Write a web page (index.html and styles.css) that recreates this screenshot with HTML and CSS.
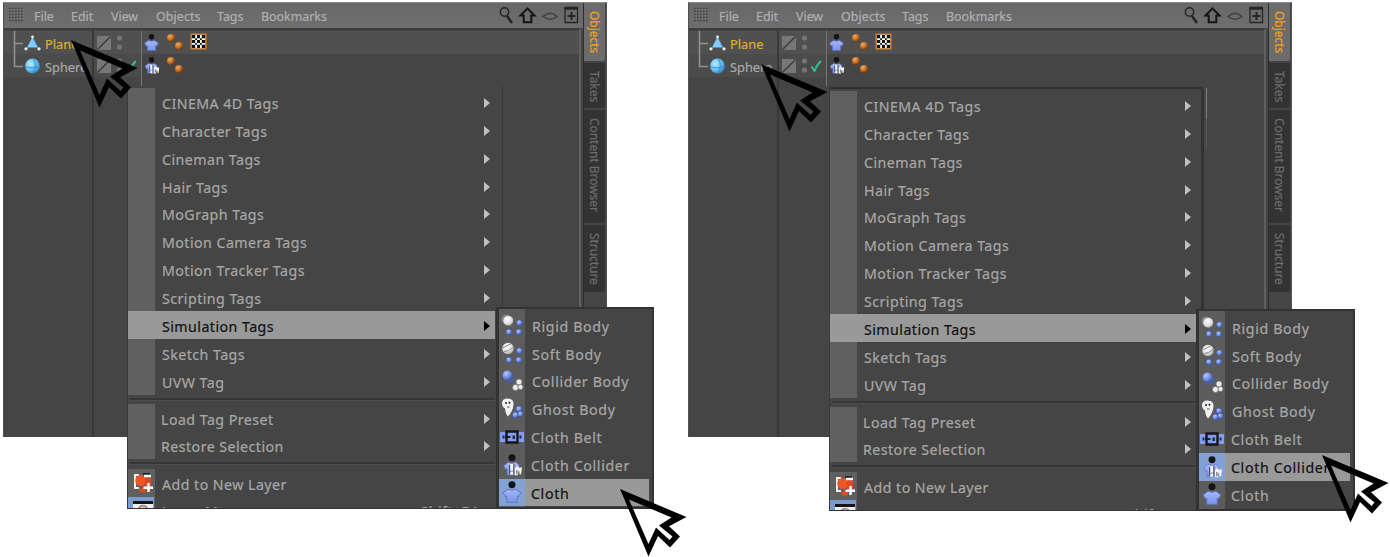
FILE: index.html
```html
<!DOCTYPE html>
<html lang="en">
<head>
<meta charset="utf-8">
<title>Simulation Tags</title>
<link rel="stylesheet" href="styles.css">
</head>
<body>
<svg class="defs" aria-hidden="true">
  <defs>
    <radialGradient id="gBlue" cx=".35" cy=".3" r=".75"><stop offset="0" stop-color="#b5c8ff"/><stop offset=".6" stop-color="#6d8ade"/><stop offset="1" stop-color="#3c54a0"/></radialGradient>
    <radialGradient id="gWhite" cx=".4" cy=".35" r=".75"><stop offset="0" stop-color="#fff"/><stop offset=".6" stop-color="#dedede"/><stop offset="1" stop-color="#8a8a8a"/></radialGradient>
    <radialGradient id="gOrange" cx=".35" cy=".3" r=".75"><stop offset="0" stop-color="#f3aa60"/><stop offset=".5" stop-color="#c8732a"/><stop offset="1" stop-color="#693208"/></radialGradient>
    <radialGradient id="gSky" cx=".35" cy=".35" r=".75"><stop offset="0" stop-color="#b8ecff"/><stop offset=".6" stop-color="#5fbcf0"/><stop offset="1" stop-color="#2878b5"/></radialGradient>
    <linearGradient id="gShirt" x2="0" y2="1"><stop offset="0" stop-color="#a6b8fb"/><stop offset="1" stop-color="#7894e6"/></linearGradient>
  </defs>
  <symbol id="cursor" viewBox="0 0 67 68"><path fill-rule="evenodd" d="M0 0 66.5 28 49 37.300 60 47.500 50 58.500 38 47 28.500 67.500ZM9 10.500 28.500 55 36 38.500 49.500 51 52.500 47.500 39 36.500 51.500 28.500Z"/></symbol>
  <symbol id="grip" viewBox="0 0 15 15"><g fill="none" stroke="#444" stroke-width="1.400" stroke-dasharray="1.800 1.200"><path d="M0 1.500h15M0 4.500h15M0 7.500h15M0 10.500h15M0 13.500h15"/></g><g fill="none" stroke="#999" stroke-width=".6" stroke-dasharray="1 2"><path d="M1.500 2.600h13M1.500 5.600h13M1.500 8.600h13M1.500 11.600h13"/></g></symbol>
  <symbol id="tools" viewBox="0 0 80 20"><g fill="none" stroke="#252525"><circle cx="5.500" cy="6" r="4.200" stroke-width="1.500"/><path d="m8 10 5 7" stroke-width="2.600"/><path d="M28.500 2.400 21.500 9.600h3.200v6.600h7.600V9.600h3.200Z" stroke-width="2" stroke="#151515"/><path d="M44 10.500q7.500-6.500 14 0-6.500 5.500-14 0Z" stroke="#404040" stroke-width="1.500"/><path d="M66 2h12.500v14.500H66Z" stroke-width="1.300"/><path d="M65.500 2.200h13.500" stroke-width="3"/><path d="M68.500 10h8M72.500 6v8" stroke-width="2"/></g></symbol>
  <symbol id="tree" viewBox="0 0 12 46"><path d="M2.500 0v35.500H11M2.500 12.500H11" fill="none" stroke="#929292" stroke-width="1.500"/></symbol>
  <symbol id="plane" viewBox="0 0 17 16"><path d="m8.500 2 5.500 10.500H3Z" fill="#86cbfb"/><path d="m8.500 2 5.500 10.500H3" fill="none" stroke="#4c91c4"/><g fill="#eee"><circle cx="8.500" cy="2" r="1.400"/><circle cx="2" cy="13.800" r="1.600"/><circle cx="15" cy="13.800" r="1.600"/></g></symbol>
  <symbol id="sphere" viewBox="0 0 17 16"><circle cx="8.500" cy="8" r="7.400" fill="url(#gSky)"/><path d="M9.500.8q4 7-.5 14.400M1.200 8.500q7 3 14.600-.5" fill="none" stroke="#348bc5" stroke-width=".9"/></symbol>
  <symbol id="vis" viewBox="0 0 42 18"><path d="M1 2h14v14H1Z" fill="#777"/><path d="m1.500 15.500 13-13" stroke="#3d3d3d" stroke-width="1.600"/><circle cx="23.500" cy="4" r="2.600" fill="#747474"/><circle cx="23.500" cy="13" r="2.600" fill="#747474"/></symbol>
  <symbol id="check" viewBox="0 0 12 12"><path d="m1.500 6.500 3 4.500Q7 4.500 11 1" fill="none" stroke="#2bc98a" stroke-width="1.800"/></symbol>
  <symbol id="cloth" viewBox="0 0 20 22"><circle cx="10" cy="4.300" r="3.200" fill="#141414"/><path d="M6.500 8.500q3.500 1.800 7 0l4.500 3.200-1.700 3.500-1.500-.5V20.500H5.200v-5.800l-1.500.5L2 11.700Z" fill="url(#gShirt)" stroke="#5c75c4" stroke-width=".9"/></symbol>
  <symbol id="collider" viewBox="0 0 20 22"><circle cx="10" cy="4.300" r="3.200" fill="#141414"/><path d="M6.500 8.500q3.500 1.800 7 0l3 2.500v6l-3 3h-8v-6L4 15l-1.500-3.300Z" fill="url(#gShirt)" stroke="#5c75c4" stroke-width=".6"/><path d="M8.500 10h2.500v6H8.500ZM8.500 17.200h2.500v2.800H8.500ZM12.500 14l2.300-2 1.500 1.500 2.800-.5-.8 6.500h-1.500v-3h-1.200v4h-3.100Z" fill="#f7f7f7"/><path d="M11.700 10v9.500M14.500 15.500v4M7.800 11v8" stroke="#4a4a4a" stroke-width=".9"/></symbol>
  <symbol id="dyn" viewBox="0 0 18 18"><circle cx="5" cy="5" r="4" fill="url(#gOrange)"/><circle cx="13" cy="13" r="4" fill="url(#gOrange)"/></symbol>
  <symbol id="checker" viewBox="0 0 17 17"><path d="M1 1h15v15H1Z" fill="#fff" stroke="#b36b2c" stroke-width="1.700"/><path d="M2 2h3.200v3.200H2ZM7 2h3v3.200H7ZM11.800 2H15v3.200h-3.200ZM5.200 5.200H7V7H5.200ZM10 5.200h1.800V7H10ZM2 7h3.200v3H2ZM7 7h3v3H7ZM11.800 7H15v3h-3.200ZM5.200 10H7v1.800H5.200ZM10 10h1.800v1.800H10ZM2 11.800h3.200V15H2ZM7 11.800h3V15H7ZM11.800 11.800H15V15h-3.200Z" fill="#131313"/><path d="M2.600 2.600h2v2h-2ZM12.400 2.600h2v2h-2ZM2.600 12.400h2v2h-2ZM12.400 12.400h2v2h-2Z" fill="#131313"/></symbol>
  <symbol id="rigid" viewBox="0 0 24 24"><circle cx="6" cy="6" r="4.500" fill="#858585"/><circle cx="8.300" cy="7.800" r="5" fill="url(#gWhite)"/><g fill="url(#gBlue)" stroke="#40599d" stroke-width=".7"><circle cx="19.500" cy="9.800" r="3"/><circle cx="9" cy="19" r="3"/><circle cx="18.800" cy="19" r="3"/></g></symbol>
  <symbol id="soft" viewBox="0 0 24 24"><circle cx="8" cy="7.500" r="5.700" fill="url(#gWhite)"/><path d="m2.500 7 8-4M4 10.500q5 0 9-4" stroke="#8a8a8a" fill="none"/><g fill="url(#gBlue)" stroke="#40599d" stroke-width=".7"><circle cx="19.500" cy="9.800" r="3"/><circle cx="9" cy="19" r="3"/><circle cx="18.800" cy="19" r="3"/></g></symbol>
  <symbol id="cbody" viewBox="0 0 24 24"><circle cx="10" cy="9.500" r="4.500" fill="#4b5e99"/><circle cx="7.500" cy="6.500" r="4.900" fill="url(#gBlue)"/><g fill="#eee" stroke="#777" stroke-width=".8"><circle cx="19" cy="13" r="3"/><circle cx="15.500" cy="18.500" r="3"/><circle cx="20.500" cy="18" r="2.500"/></g></symbol>
  <symbol id="ghost" viewBox="0 0 24 24"><path d="M2 7Q1.500 1.500 7.500 1.500q6.500 0 6 6Q13 14 8 19.500 5.500 17 5 11.500 2.500 10.500 2 7Z" fill="#f0f0f0"/><circle cx="6" cy="6" r="1" fill="#222"/><circle cx="9.500" cy="5.800" r="1" fill="#222"/><path d="M7 10h2.500" stroke="#555"/><g fill="url(#gBlue)" stroke="#40599d" stroke-width=".7"><circle cx="19" cy="12" r="3.100"/><circle cx="15.500" cy="18" r="3.100"/><circle cx="20.500" cy="17" r="2.800"/></g></symbol>
  <symbol id="belt" viewBox="0 0 24 24"><path d="M0 7h24v10H0Z" fill="#819df5"/><path d="M2.500 10.500h2v3h-2ZM19.500 10.500h2v3h-2Z" fill="#222b55"/><path d="M6.500 6.500h11v11h-11Z" fill="none" stroke="#161616" stroke-width="2.400"/><path d="M12.500 10.500h2.500v3.500h-2.500Z" fill="#222b55"/><path d="M5 12h5.500" stroke="#161616" stroke-width="1.800"/></symbol>
  <symbol id="layer" viewBox="0 0 22 22"><path d="M2 2h5v2H4v11h3v2H2Z" fill="#f0f0f0"/><path d="M11 1h7v2h-7Z" fill="#222"/><circle cx="8.800" cy="8.500" r="5.500" fill="#ed5525"/><path d="M13 5.500h6v9h-4l-1.500 6H8l-1-3.500 6-2Z" fill="#d84d24"/><path d="M12 4h7M16.500 11v9M11.500 15.800h9.500" stroke="#fff" stroke-width="2.400"/></symbol>
  <symbol id="manager" viewBox="0 0 22 22"><path d="M1 0h20v22H1Z" fill="#eee"/><path d="M1 0h20v3H1Z" fill="#151515"/><circle cx="11" cy="9" r="4.500" fill="#f0b59d" stroke="#888" stroke-width="1.500"/></symbol>
</svg>

<main class="stage">
  <section class="shot shot-left">
    <div class="window">
      <div class="manager">
        <nav class="menubar"><svg class="grip"><use href="#grip"/></svg><span class="m-file">File</span><span class="m-edit">Edit</span><span class="m-view">View</span><span class="m-objects">Objects</span><span class="m-tags">Tags</span><span class="m-book">Bookmarks</span><svg class="tools"><use href="#tools"/></svg></nav>
        <div class="content">
          <div class="tree"><svg class="lines"><use href="#tree"/></svg>
            <div class="obj first"><svg><use href="#plane"/></svg><span class="selected">Plane</span></div>
            <div class="obj"><svg><use href="#sphere"/></svg><span>Sphere</span></div>
          </div>
          <div class="flags">
            <div class="flag first"><svg class="vis"><use href="#vis"/></svg></div>
            <div class="flag"><svg class="vis"><use href="#vis"/></svg><svg class="check"><use href="#check"/></svg></div>
          </div>
          <div class="tags">
            <div class="tagrow first"><svg class="t-cloth"><use href="#cloth"/></svg><svg class="t-dyn"><use href="#dyn"/></svg><svg class="t-checker"><use href="#checker"/></svg></div>
            <div class="tagrow"><svg class="t-cloth"><use href="#collider"/></svg><svg class="t-dyn"><use href="#dyn"/></svg></div>
          </div>
        </div>
      </div>
      <aside class="tabs"><div class="tab active t1">Objects</div><div class="tab t2">Takes</div><div class="tab t3">Content Browser</div><div class="tab t4">Structure</div></aside>
    </div>
    <i class="guide"></i>
    <div class="menu">
      <div class="group">
        <div class="item">CINEMA 4D Tags<b></b></div><div class="item">Character Tags<b></b></div><div class="item">Cineman Tags<b></b></div><div class="item">Hair Tags<b></b></div><div class="item">MoGraph Tags<b></b></div><div class="item">Motion Camera Tags<b></b></div><div class="item">Motion Tracker Tags<b></b></div><div class="item">Scripting Tags<b></b></div><div class="item hot">Simulation Tags<b></b></div><div class="item">Sketch Tags<b></b></div><div class="item">UVW Tag<b></b></div>
      </div>
      <div class="group second"><div class="item">Load Tag Preset<b></b></div><div class="item">Restore Selection<b></b></div></div>
      <div class="group"><div class="item"><svg class="layer"><use href="#layer"/></svg>Add to New Layer</div><div class="item last"><svg class="layer lm"><use href="#manager"/></svg>Layer Manager...<span class="key">Shift+F4</span></div></div>
    </div>
    <div class="submenu">
      <div class="sub"><svg><use href="#rigid"/></svg>Rigid Body</div><div class="sub"><svg><use href="#soft"/></svg>Soft Body</div><div class="sub"><svg><use href="#cbody"/></svg>Collider Body</div><div class="sub"><svg><use href="#ghost"/></svg>Ghost Body</div><div class="sub"><svg><use href="#belt"/></svg>Cloth Belt</div><div class="sub"><svg><use href="#collider"/></svg>Cloth Collider</div><div class="sub hot"><svg><use href="#cloth"/></svg>Cloth</div>
    </div>
    <svg class="cursor c1"><use href="#cursor"/></svg>
    <svg class="cursor c2"><use href="#cursor"/></svg>
  </section>

  <section class="shot shot-right">
    <div class="window">
      <div class="manager">
        <nav class="menubar"><svg class="grip"><use href="#grip"/></svg><span class="m-file">File</span><span class="m-edit">Edit</span><span class="m-view">View</span><span class="m-objects">Objects</span><span class="m-tags">Tags</span><span class="m-book">Bookmarks</span><svg class="tools"><use href="#tools"/></svg></nav>
        <div class="content">
          <div class="tree"><svg class="lines"><use href="#tree"/></svg>
            <div class="obj first"><svg><use href="#plane"/></svg><span class="selected">Plane</span></div>
            <div class="obj"><svg><use href="#sphere"/></svg><span>Sphere</span></div>
          </div>
          <div class="flags">
            <div class="flag first"><svg class="vis"><use href="#vis"/></svg></div>
            <div class="flag"><svg class="vis"><use href="#vis"/></svg><svg class="check"><use href="#check"/></svg></div>
          </div>
          <div class="tags">
            <div class="tagrow first"><svg class="t-cloth"><use href="#cloth"/></svg><svg class="t-dyn"><use href="#dyn"/></svg><svg class="t-checker"><use href="#checker"/></svg></div>
            <div class="tagrow"><svg class="t-cloth"><use href="#collider"/></svg><svg class="t-dyn"><use href="#dyn"/></svg></div>
          </div>
        </div>
      </div>
      <aside class="tabs"><div class="tab active t1">Objects</div><div class="tab t2">Takes</div><div class="tab t3">Content Browser</div><div class="tab t4">Structure</div></aside>
    </div>
    <i class="guide"></i>
    <div class="menu">
      <div class="group">
        <div class="item">CINEMA 4D Tags<b></b></div><div class="item">Character Tags<b></b></div><div class="item">Cineman Tags<b></b></div><div class="item">Hair Tags<b></b></div><div class="item">MoGraph Tags<b></b></div><div class="item">Motion Camera Tags<b></b></div><div class="item">Motion Tracker Tags<b></b></div><div class="item">Scripting Tags<b></b></div><div class="item hot">Simulation Tags<b></b></div><div class="item">Sketch Tags<b></b></div><div class="item">UVW Tag<b></b></div>
      </div>
      <div class="group second"><div class="item">Load Tag Preset<b></b></div><div class="item">Restore Selection<b></b></div></div>
      <div class="group"><div class="item"><svg class="layer"><use href="#layer"/></svg>Add to New Layer</div><div class="item last"><svg class="layer lm"><use href="#manager"/></svg>Layer Manager...<span class="key">Shift+F4</span></div></div>
    </div>
    <div class="submenu">
      <div class="sub"><svg><use href="#rigid"/></svg>Rigid Body</div><div class="sub"><svg><use href="#soft"/></svg>Soft Body</div><div class="sub"><svg><use href="#cbody"/></svg>Collider Body</div><div class="sub"><svg><use href="#ghost"/></svg>Ghost Body</div><div class="sub"><svg><use href="#belt"/></svg>Cloth Belt</div><div class="sub hot"><svg><use href="#collider"/></svg>Cloth Collider</div><div class="sub"><svg><use href="#cloth"/></svg>Cloth</div>
    </div>
    <svg class="cursor c1"><use href="#cursor"/></svg>
    <svg class="cursor c2"><use href="#cursor"/></svg>
  </section>
</main>
</body>
</html>
```
FILE: styles.css
```css
* { box-sizing: border-box; }
body { margin: 0; background: #fff; font-family: "Noto Sans", "Open Sans", sans-serif; overflow: hidden; -webkit-text-stroke-width: .2px; }
svg { display: block; flex: none; }
.defs { position: absolute; width: 0; height: 0; }
.stage { display: grid; grid-template-columns: 685px 705px; height: 557px; }
.shot { position: relative; padding: 2px 0 0 3px; }

/* object manager window */
.window { width: 604px; height: 435px; display: flex; background: #454545; border-top: 1px solid #8a8a8a; border-left: 1px solid #505050; border-right: 1px solid #575054; }
.manager { width: 579px; display: flex; flex-direction: column; }
.menubar { height: 25px; display: flex; align-items: center; background: linear-gradient(#686868, #6e6e6e); color: #b0b0b0; font-size: 12.4px; padding-left: 5px; white-space: nowrap; }
.menubar span { flex: none; margin-top: 1px; }
.grip { width: 15px; height: 15px; margin-top: -2px; }
.menubar .m-file { width: 37px; margin-left: 10px; }
.m-edit { width: 40px; }
.m-view { width: 45px; }
.m-objects { width: 61px; letter-spacing: .1px; }
.m-tags { width: 44px; }
.tools { width: 80px; height: 20px; margin-left: auto; margin-right: 4px; }
.content { flex: 1; display: grid; grid-template-columns: 90px 47px 1fr; border-top: 2px solid #3d3d3d; border-right: 2px solid #606060; margin-right: 2px; padding-top: 1px; }
.tree { position: relative; border-right: 2px solid #393939; }
.lines { position: absolute; left: 8px; top: 0; width: 12px; height: 46px; }
.obj { height: 23px; display: flex; align-items: center; gap: 4px; padding: 2px 0 0 20px; background: #4b4b4b; color: #aaa; font-size: 12.8px; }
.obj svg { width: 17px; height: 16px; margin-top: -1px; }
.obj.first, .flag.first, .tagrow.first { background: #505050; }
.obj .selected { color: #dcb02e; }
.flag { height: 23px; display: flex; align-items: center; background: #4b4b4b; padding-left: 2px; }
.vis { width: 42px; height: 18px; }
.check { width: 12px; height: 12px; margin-left: -13px; }
.tags { position: relative; }
.tags::before { content: ""; position: absolute; left: 0; top: 0; width: 1px; height: 55px; background: #777; }
.tagrow { height: 23px; display: flex; align-items: center; padding-left: 2px; }
.t-cloth { width: 17px; height: 19px; }
.t-dyn { width: 18px; height: 18px; margin: -2px 6px 0 6px; }
.t-checker { width: 17px; height: 17px; margin-top: -2px; }
.tabs { width: 23px; display: flex; flex-direction: column; gap: 2px; border-left: 1px solid #2e2e2e; }
.tab { writing-mode: vertical-rl; width: 22px; line-height: 22px; background: #333; color: #6c6c6c; font-size: 12px; border-radius: 0 0 3px 0; padding-top: 8px; border-right: 1px solid #444; letter-spacing: -.05px; white-space: nowrap; }
.tab.active { background: #6c6c6c; color: #f0a11e; }
.t1 { height: 58px; }
.t2 { height: 45px; }
.t3 { height: 113px; }
.t4 { height: 67px; }

/* context menu */
.guide { position: absolute; left: 502px; top: 86px; width: 1px; height: 222px; background: #373737; }
.menu { position: absolute; left: 127px; top: 87px; width: 370px; height: 421.5px; overflow: hidden; background: #454545; border-left: 1px solid #3a3a3a; border-bottom: 1px solid #343434; padding: 1px 2px 0 0; }
.group { background: linear-gradient(90deg, #606060 27px, transparent 27px); position: relative; }
.second { margin: 9px 0 9.500px; }
.second::before, .second::after { content: ""; position: absolute; left: 2px; right: 0; height: 2px; background: #363636; border-bottom: 1px solid #4e4e4e; }
.second::before { top: -6px; }
.second::after { bottom: -6px; }
.item { position: relative; height: 27.890px; display: flex; align-items: center; padding: 3px 0 0 34px; color: #a8a8a6; font-size: 14.2px; letter-spacing: .46px; white-space: nowrap; }
.second .item { padding-left: 33px; }
.item b { margin: -1px 5px 0 auto; border-left: 6px solid #c0c0c0; border-top: 5.500px solid transparent; border-bottom: 5.500px solid transparent; }
.item.hot { background: #999; color: #111; }
.hot b { border-left-color: #000; }
.item .layer { width: 22px; height: 22px; margin: -3px 8px 0 -30px; }
.item.last { background: linear-gradient(90deg, #7a9bd0 26px, transparent 26px); align-items: flex-start; line-height: 20px; padding-top: 5px; }
.item .lm { margin-top: -1px; }
.key { margin: 0 17px 0 auto; }

/* simulation tags submenu */
.submenu { position: absolute; left: 496px; top: 307px; width: 158px; height: 201.5px; background: linear-gradient(90deg, #5c5c5c 26px, #454545 26px); border: solid #333; border-width: 2px 2px 2px 3px; padding-top: 2.300px; overflow: hidden; }
.sub { height: 27.890px; margin-right: 3px; display: flex; align-items: center; gap: 8px; padding: 2px 0 0 1px; color: #a8a8a6; font-size: 14.2px; letter-spacing: .65px; white-space: nowrap; }
.sub svg { width: 24px; height: 24px; margin-top: -2px; }
.sub.hot { background: linear-gradient(90deg, #82a2d5 26px, #999 26px); color: #111; }
.sub:nth-child(n+5) { gap: 7px; }
.cursor { position: absolute; width: 67px; height: 68px; }
.c1 { left: 71px; top: 40px; }
.c2 { left: 620px; top: 488.500px; }

/* second shot offsets */
.shot-right .menu { left: 144px; top: 87px; width: 375px; height: 423.500px; border-top: 2px solid #303030; border-right: 3px solid #333; border-radius: 0 4px 0 0; padding: 2px 0 0; }
.shot-right .item b { margin-right: 10px; }
.shot-right .guide { left: 521px; top: 88px; height: 62px; background: linear-gradient(#7c7c7c 50%, #555 50%); }
.shot-right .submenu { left: 511px; top: 309px; width: 159px; }
.shot-right .c1 { left: 76px; top: 64px; }
.shot-right .c2 { left: 637px; top: 454.500px; }
```
